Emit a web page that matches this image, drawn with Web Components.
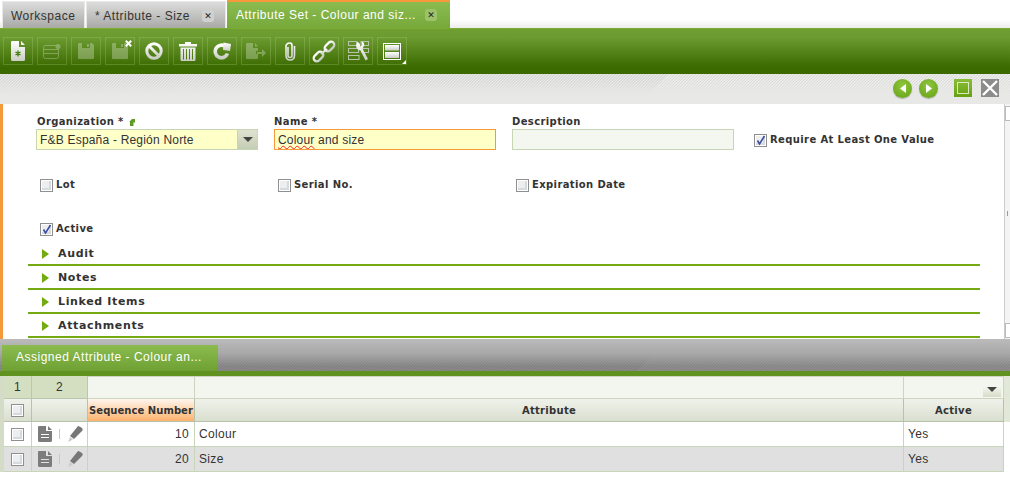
<!DOCTYPE html>
<html><head><meta charset="utf-8"><title>Attribute Set</title>
<style>
html,body{margin:0;padding:0;background:#fff;font-family:"Liberation Sans",sans-serif}
erp-app{width:1010px;height:479px}
svg{display:block}
</style></head><body>
<erp-app>
  <erp-tabs>
    <erp-tab style="width:83px">Workspace</erp-tab>
    <erp-tab closable style="width:140px">* Attribute - Size</erp-tab>
    <erp-tab closable active style="width:223px">Attribute Set - Colour and siz...</erp-tab>
  </erp-tabs>
  <erp-toolbar>
    <erp-tool><svg width="14" height="20" viewBox="0 0 14 20"><defs><linearGradient id="w" x1="0" y1="0" x2="0" y2="1"><stop offset="0" stop-color="#fff"/><stop offset="1" stop-color="#c9cdc4"/></linearGradient></defs><path d="M1 0H8V6H14V18.500Q14 20 12.500 20H1.500Q0 20 0 18.500V1Q0 0 1 0ZM10 0L14 4H10Z" fill="url(#w)"/><path d="M7 9.500V15.500M4.500 11L9.500 14M9.500 11L4.500 14" stroke="#3f7f0f" stroke-width="1.300"/></svg></erp-tool>
    <erp-tool off><svg width="19" height="16" viewBox="0 0 19 16" fill="none" stroke="#fff" stroke-width="1"><rect x=".5" y="2.500" width="15" height="13" rx="2"/><path d="M.5 6.500H15.500M.5 10.500H15.500"/><circle cx="15" cy="3.500" r="2.500" fill="#fff" stroke="none"/></svg></erp-tool>
    <erp-tool off><svg width="16" height="16" viewBox="0 0 16 16"><path fill="#fff" fill-rule="evenodd" d="M1 0H14L16 2V15Q16 16 15 16H1Q0 16 0 15V1Q0 0 1 0ZM4 0V5H12V0ZM9 1H11V4H9Z"/></svg></erp-tool>
    <erp-tool off><svg width="16" height="16" viewBox="0 0 16 16"><path fill="#fff" fill-rule="evenodd" d="M1 0H14L16 2V15Q16 16 15 16H1Q0 16 0 15V1Q0 0 1 0ZM4 0V5H12V0ZM9 1H11V4H9Z"/></svg><svg slot="corner" width="7" height="7" viewBox="0 0 7 7"><path d="M.8 .8L6.200 6.200M6.200 .8L.8 6.200" stroke="#fff" stroke-width="2"/></svg></erp-tool>
    <erp-tool><svg width="18" height="18" viewBox="0 0 18 18"><circle cx="9" cy="9" r="7.200" fill="none" stroke="url(#w)" stroke-width="3"/><path d="M4 4L14 14" stroke="url(#w)" stroke-width="3"/></svg></erp-tool>
    <erp-tool><svg width="18" height="19" viewBox="0 0 18 19"><path fill="url(#w)" d="M0 2H6V0H12V2H18V4.500H0ZM1.500 5.500H16.500V17.500Q16.500 19 15 19H3Q1.500 19 1.500 17.500ZM4 7V17.500H5V7ZM7 7V17.500H8V7ZM10 7V17.500H11V7ZM13 7V17.500H14V7Z"/></svg></erp-tool>
    <erp-tool><svg width="18" height="18" viewBox="0 0 18 18"><path fill="none" stroke="url(#w)" stroke-width="3.600" d="M14.500 11.500A6.300 6.300 0 1 1 12.500 4.500"/><path fill="url(#w)" d="M10.500 0.500L18 2L17 9L10 8Z"/></svg></erp-tool>
    <erp-tool off><svg width="20" height="16" viewBox="0 0 20 16"><path fill="#fff" d="M1 0H7V5H12V8H10V11H12V15Q12 16 11 16H1Q0 16 0 15V1Q0 0 1 0ZM9 0L12 3.500H9ZM11 9H16V6L20 10L16 14V11H11Z"/></svg></erp-tool>
    <erp-tool><svg width="12" height="19" viewBox="0 0 12 19"><path fill="none" stroke="url(#w)" stroke-width="1.600" d="M4 5V13.500Q4 15.500 6 15.500Q8 15.500 8 13.500V3.500Q8 1 5.800 1Q3 1 2 3.500V13Q2 18 6 18Q10.500 18 10.500 13V4"/></svg></erp-tool>
    <erp-tool><svg width="24" height="23" viewBox="0 0 24 23" fill="none" stroke="url(#w)" stroke-width="2.200"><rect x="-5.500" y="-3.200" width="11" height="6.400" rx="3.200" transform="translate(6.500 16.500) rotate(-45)"/><rect x="-5.500" y="-3.200" width="11" height="6.400" rx="3.200" transform="translate(17.500 6.500) rotate(-45)"/><path d="M9 14L15 9" stroke-width="2.200"/></svg></erp-tool>
    <erp-tool><svg width="21" height="20" viewBox="0 0 21 20"><g fill="none" stroke="#b9c3aa" stroke-width="1"><rect x=".5" y=".5" width="8" height="4"/><rect x="13" y=".5" width="7.500" height="4"/><rect x=".5" y="7.500" width="10" height="4"/><rect x="14" y="7.500" width="6.500" height="4"/><rect x=".5" y="14.500" width="10.500" height="4"/></g><path fill="url(#w)" d="M9.500 .5L12 3V5.500L14 4.500L13.500 .5Q17 1 16 5L14.500 7.500L20 18L17.500 19.500L12.500 9.500Q8.500 9 8 4.500Z"/></svg></erp-tool>
    <erp-tool corner><svg width="18" height="17" viewBox="0 0 18 17"><rect x=".5" y=".5" width="17" height="16" fill="none" stroke="#fff"/><rect x="2" y="2" width="14" height="5.500" fill="url(#w)"/><rect x="2" y="9" width="14" height="6" fill="url(#w)"/></svg></erp-tool>
  </erp-toolbar>
  <erp-navstrip></erp-navstrip>
  <erp-form>
    <erp-field label="Organization *" link><erp-input value="F&amp;B España - Región Norte" tone="req" combo></erp-input></erp-field>
    <erp-field label="Name *"><erp-input tone="focus"><span style="text-decoration:underline wavy #e22 1px;text-underline-offset:1px">Colour</span> and size</erp-input></erp-field>
    <erp-field label="Description"><erp-input tone="plain"></erp-input></erp-field>
    <erp-check checked class="top">Require At Least One Value</erp-check>
    <erp-check>Lot</erp-check><erp-check>Serial No.</erp-check><erp-check>Expiration Date</erp-check><span></span>
    <erp-check checked>Active</erp-check>
    <erp-sections>
      <erp-section>Audit</erp-section>
      <erp-section>Notes</erp-section>
      <erp-section>Linked Items</erp-section>
      <erp-section>Attachments</erp-section>
    </erp-sections>
  </erp-form>
  <erp-subtabs>Assigned Attribute - Colour an...</erp-subtabs>
  <erp-grid></erp-grid>
</erp-app>
<script>
function def(name,css,html,extra){
  customElements.define(name,class extends HTMLElement{
    constructor(){super();this.attachShadow({mode:'open'}).innerHTML='<style>'+css+'</style>'+html(this);}
    connectedCallback(){extra&&extra(this);}
  });
}
const hatch=(c)=>`repeating-linear-gradient(135deg,${c} 0 1px,transparent 1px 2.12px)`;
def('erp-app',':host{display:flex;flex-direction:column;overflow:hidden;color:#333}',()=>'<slot></slot>');
def('erp-tabs',`:host{display:flex;height:28px;padding-left:2px;box-sizing:border-box;flex:none;
 background:linear-gradient(#fff 70%,#ececec)}`,()=>'<slot></slot>');
def('erp-tab',`:host{display:flex;align-items:center;box-sizing:border-box;height:27px;margin-top:1px;margin-right:1px;padding:1px 11px 0 8px;flex:none;
 font-size:12px;letter-spacing:.5px;color:#333;white-space:nowrap;
 background:linear-gradient(#dcdcdc,#a9aaa6);border:1px solid #e8e8e6;border-bottom:0}
:host([active]){height:28px;margin-top:0;margin-right:0;border:0;border-top:2px solid #f6993a;color:#fff;padding:0 13px 1px 9px;background:linear-gradient(#8cbc50,#76a83c)}
.x{display:flex;align-items:center;justify-content:center;width:12px;height:12px;margin-left:auto;border-radius:3px;background:#d0d0ce;color:#222;font:bold 9px "DejaVu Sans",sans-serif;letter-spacing:0}
:host([active]) .x{background:#9cc36b}`,
 h=>'<slot></slot>'+(h.hasAttribute('closable')?'<span class="x">✕</span>':''));
def('erp-toolbar',`:host{display:flex;gap:4px;height:46px;box-sizing:border-box;flex:none;padding:8px 0 0 3px;border-top:1px solid #7cab2e;
 background:linear-gradient(#6f9f33,#6a9a30 20%,#3b6b00 85%,#3b6b00)}`,()=>'<slot></slot>');
def('erp-tool',`:host{position:relative;display:flex;align-items:center;justify-content:center;width:30px;height:28px;box-sizing:border-box;border:1px solid rgba(200,225,150,.22)}
:host([off]) ::slotted(svg:not([slot])){opacity:.28}
.c{position:absolute;right:2px;top:2px;display:block}
:host([corner])::after{content:"";position:absolute;right:0;bottom:0;border:solid transparent;border-width:0 0 4px 4px;border-bottom-color:#fff;}`,
 ()=>'<slot></slot><span class="c"><slot name="corner"></slot></span>');
def('erp-navstrip',`:host{display:flex;align-items:center;height:30px;box-sizing:border-box;flex:none;padding:0 11px 2px 0;justify-content:flex-end;
 background:linear-gradient(rgba(232,233,230,.2) 20%,#e8e9e6 75%),${hatch('#d6d6d4')},#ececea}
.r{width:19px;height:19px;border-radius:50%;background:radial-gradient(circle at 50% 35%,#8fc640,#64a012);box-shadow:0 1px 1px #aaa;display:flex;align-items:center;justify-content:center}
.g{width:18px;height:18px;box-sizing:border-box;background:linear-gradient(#8abc38,#66a212);padding:3px}
.g i{display:block;width:100%;height:100%;box-sizing:border-box;border:1px solid #dbe9bb}
.c{width:18px;height:18px;background:#8c8c8c;margin-left:9px}`,
 ()=>`<span class="r" style="margin-right:7px"><svg width="6" height="9"><path d="M6 0V9L0 4.500Z" fill="#fff"/></svg></span><span class="r" style="margin-right:16px"><svg width="6" height="9"><path d="M0 0V9L6 4.500Z" fill="#fff"/></svg></span><span class="g"><i></i></span><svg class="c" viewBox="0 0 18 18"><path d="M2 2L16 16M16 2L2 16" stroke="#fff" stroke-width="2.400"/></svg>`);
def('erp-form',`:host{position:relative;display:grid;grid-template-columns:222px 222px 222px 1fr;column-gap:16px;grid-template-rows:64px 44px 19px auto;align-content:start;height:235px;box-sizing:border-box;flex:none;padding:11px 0 0 33px;background:#fff;border-left:3px solid #f6993a}
.sb{position:absolute;right:0;top:0;bottom:0;width:5px;background:#f4f4f4;border-left:1px solid #ccc}
.sb i{position:absolute;left:0;right:0;height:15px;background:#fff;border:1px solid #bbb;border-right:0;box-sizing:border-box}
.sb b{position:absolute;left:2px;top:107px;width:1px;height:5px;background:#999}`,
 ()=>'<slot></slot><div class="sb"><i style="top:2px"></i><b></b><i style="bottom:1px"></i></div>');
const lab='font:bold 10px "DejaVu Sans",sans-serif;letter-spacing:.38px;color:#333;white-space:nowrap';
def('erp-field',`:host{display:flex;flex-direction:column;gap:2px}
.l{${lab};height:12px;line-height:12px;padding:1px 0 0 0;margin:0 0 -1px 1px;display:flex;align-items:center;gap:5px}
:host([label^=N]) .l,:host([label^=D]) .l{margin-left:0}`,
 h=>`<div class="l">${h.getAttribute('label')}${h.hasAttribute('link')?'<svg width="6" height="7" viewBox="0 0 6 7"><path d="M1 7V3H0L3 0H6V4L4.500 3V7Z" fill="#5e9c2a"/></svg>':''}</div><slot></slot>`);
def('erp-input',`:host{display:flex;height:21px;box-sizing:border-box;border:1px solid #c6d6b4;background:#f3f7ef;font-size:12px;color:#333}
:host([tone=req]){background:#ffffc8}
:host([tone=focus]){background:#ffffc8;border-color:#f6993a}
.t{flex:1;padding:0 3px;line-height:21px;white-space:nowrap;overflow:hidden;letter-spacing:.2px}
.b{flex:none;width:19px;border-left:1px solid #c6d6b4;background:linear-gradient(#dde3cf,#c5cdb5);display:flex;align-items:center;justify-content:center}`,
 h=>`<div class="t">${h.getAttribute('value')||''}<slot></slot></div>`+(h.hasAttribute('combo')?'<div class="b"><svg width="10" height="5"><path d="M0 0H10L5 5Z" fill="#444"/></svg></div>':''));
const box=(c)=>`<svg width="13" height="13" viewBox="0 0 13 13" style="display:block;flex:none"><rect x=".5" y=".5" width="12" height="12" fill="#fff" stroke="#8f8f8f"/><rect x="2" y="2" width="9" height="9" fill="#d6d9de"/><rect x="2" y="2" width="7" height="7" fill="#eceef0"/>${c?'<path d="M3.500 6.500L5.500 10L10.500 2" fill="none" stroke="#3c4ea0" stroke-width="1.600"/>':''}</svg>`;
def('erp-check',`:host{display:flex;align-items:flex-start;gap:3px;padding-left:4px;height:14px;${lab}}
:host(.top){margin:19px 0 0 0;align-self:start}
span{line-height:12px}`,h=>box(h.hasAttribute('checked'))+'<span><slot></slot></span>');
def('erp-sections',`:host{grid-column:1/-1;display:flex;flex-direction:column;margin:0 0 0 -8px;width:952px}`,()=>'<slot></slot>');
def('erp-section',`:host{display:flex;align-items:center;gap:9px;height:24px;box-sizing:border-box;padding:1px 0 0 14px;border-bottom:2px solid #74aa12;font:bold 11px "DejaVu Sans",sans-serif;letter-spacing:.65px;color:#333}`,
 ()=>'<svg width="7" height="10"><path d="M0 0L7 5L0 10Z" fill="#74aa12"/></svg><slot></slot>');
def('erp-subtabs',`:host{display:block;height:37px;box-sizing:border-box;flex:none;padding:6px 0 0 2px;border-bottom:5px solid #5f921f;
 background:linear-gradient(#bbb,#a8a8a8 45%,rgba(145,145,145,.45) 85%),${hatch('rgba(70,70,70,.3)')},#8a8a8a}
div{width:216px;height:26px;box-sizing:border-box;padding:0 0 1px 14px;line-height:25px;color:#fff;font-size:12px;letter-spacing:.5px;white-space:nowrap;background:linear-gradient(#8cbc50,#6ea033)}`,()=>'<div><slot></slot></div>');
const doc=c=>`<svg width="14" height="16" viewBox="0 0 14 16"><path fill="${c}" fill-rule="evenodd" d="M1 0H8V5H14V14.500Q14 16 12.500 16H1.500Q0 16 0 14.500V1Q0 0 1 0ZM10 0L14 4H10ZM3 8V9H11V8ZM3 11V12H11V11Z"/></svg>`;
const pen=`<svg width="16" height="16" viewBox="0 0 16 16"><path fill="#777" d="M11 0Q13 0 15.500 2.500Q16 4.500 15 5L7 13L3 10Z"/><path fill="#ccc" d="M3 11L6 13.500L1 16Z"/></svg>`;
const rowTools=`<span class="tools">${doc('#7c7c7c')}<i></i>${pen}</span>`;
def('erp-grid',`:host{display:grid;flex:1;grid-template-columns:4px 28px 56px 107px 709px 100px 1fr;grid-template-rows:23px 23px 25px 25px;align-content:start;font-size:12px;letter-spacing:.35px;color:#333;background:#fff}
div{box-sizing:border-box;border-right:1px solid #c8d5b8;border-bottom:1px solid #c8d5b8;display:flex;align-items:center;min-width:0}
.edge{background:#d4dcc8;border:0}
.n{background:#d4dfc2;justify-content:center;border-color:#bcc5ae}
.f{background:#f3f6ee;border-color:#cdd5c0;border-top:1px solid #cdd5c0}
.h{${lab};justify-content:center;background:linear-gradient(#eff2ea,#d9dfcf);border-color:#b8c2aa;letter-spacing:.3px}
.h.s{background:linear-gradient(#fff6ee,#fdb26c);letter-spacing:.05px}
.c{justify-content:center}
.num{justify-content:flex-end;padding-right:5px}
.txt{padding-left:4px}
.alt{background:#e0e0e0}
.fb{margin-left:auto;margin-right:2px;width:18px;height:19px;background:linear-gradient(#f3f6ee 45%,#d5dcc7);display:flex;align-items:center;justify-content:center;padding-top:4px;box-sizing:border-box}
.tools{display:flex;align-items:center;width:100%;padding-left:6px;box-sizing:border-box}
.tools i{display:block;width:1px;height:10px;background:#c8cdb8;margin:0 7px}`,
 ()=>`<div class="edge"></div><div class="n">1</div><div class="n">2</div><div class="f"></div><div class="f"></div><div class="f"><span class="fb"><svg width="10" height="5"><path d="M0 0H10L5 5Z" fill="#444"/></svg></span></div><div class="edge" style="background:#e2e8d8"></div>
<div class="edge"></div><div class="h c">${box(0)}</div><div class="h"></div><div class="h s">Sequence Number</div><div class="h">Attribute</div><div class="h">Active</div><div class="edge" style="background:#e2e8d8"></div>
<div class="edge"></div><div class="c">${box(0)}</div><div>${rowTools}</div><div class="num">10</div><div class="txt">Colour</div><div class="txt">Yes</div><div style="border:0"></div>
<div class="edge"></div><div class="c alt">${box(0)}</div><div class="alt">${rowTools}</div><div class="num alt">20</div><div class="txt alt">Size</div><div class="txt alt">Yes</div><div style="border:0"></div>`);
</script>
</body></html>
